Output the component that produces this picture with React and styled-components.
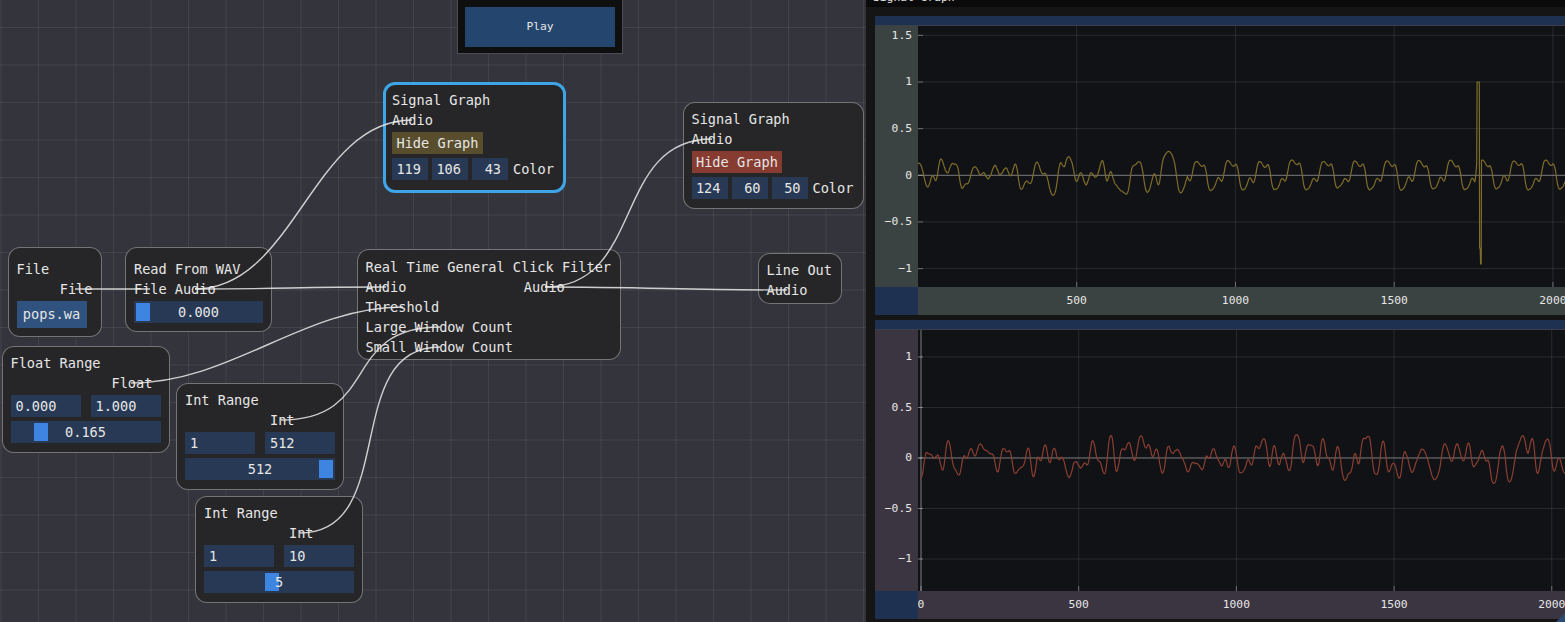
import React from 'react'
import styled, { createGlobalStyle } from 'styled-components'

const GlobalStyle = createGlobalStyle`
  html, body {
    margin: 0;
    padding: 0;
    background: #151515;
  }
  body {
    font-family: "DejaVu Sans Mono", "Liberation Mono", monospace;
    font-size: 13.6px;
    color: #e6e6e6;
  }
  * {
    box-sizing: border-box;
  }
`

// ---------- signal data ----------

function makeRandom(seed) {
  let s = seed >>> 0
  return () => {
    s = (Math.imul(s, 1664525) + 1013904223) >>> 0
    return s / 4294967296
  }
}

function smooth(arr, w, passes) {
  let a = arr
  const h = Math.floor(w / 2)
  for (let p = 0; p < passes; p++) {
    const out = new Array(a.length)
    for (let i = 0; i < a.length; i++) {
      let sum = 0
      let n = 0
      for (let k = -h; k <= h; k++) {
        const j = i + k
        if (j >= 0 && j < a.length) {
          sum += a[j]
          n++
        }
      }
      out[i] = sum / n
    }
    a = out
  }
  return a
}

function normalize(a, std) {
  const m = a.reduce((s, v) => s + v, 0) / a.length
  const v = Math.sqrt(a.reduce((s, x) => s + (x - m) ** 2, 0) / a.length)
  return a.map(x => ((x - m) / v) * std)
}

function whiteNoise(n, seed) {
  const r = makeRandom(seed)
  return Array.from({ length: n }, () => r() * 2 - 1)
}

// soft limit so peaks stay near +-0.25 like the recording
const limit = v => 0.3 * Math.tanh(v / 0.3)

const N = 2060

function topSignal() {
  const noise = normalize(smooth(whiteNoise(N, 7), 13, 3), 0.11)
  const base = normalize(smooth(whiteNoise(300, 31), 13, 3), 0.12)
  const template = Array.from({ length: 100 }, (_, i) => base[100 + i] * (1 - i / 100) + base[i] * (i / 100))
  const data = noise.map((v, i) => {
    const w = i < 850 ? 0.4 : 0.92
    return limit((w * template[i % 100] + (1 - w) * v) / Math.sqrt(w * w + (1 - w) * (1 - w)))
  })
  for (let i = 1755; i < 1761; i++) data[i] = data[i] + (i - 1754) * 0.03
  for (let i = 1761; i < 1769; i++) data[i] = 1.0
  for (let i = 1769; i < 1772; i++) data[i] = -0.78
  for (let i = 1772; i < 1775; i++) data[i] = -0.95
  return data
}

function bottomSignal() {
  return normalize(smooth(whiteNoise(N, 123), 13, 3), 0.12).map(limit)
}

const TOP_DATA = topSignal()
const BOTTOM_DATA = bottomSignal()

// ---------- layout ----------

const Screen = styled.div`
  display: flex;
  width: 1565px;
  height: 622px;
  overflow: hidden;
`

const Canvas = styled.div`
  position: relative;
  flex: none;
  width: 866px;
  height: 100%;
  overflow: hidden;
  background-color: #34343c;
  background-image:
    linear-gradient(to right, rgba(255, 255, 255, 0.07) 1px, transparent 1px),
    linear-gradient(to bottom, rgba(255, 255, 255, 0.07) 1px, transparent 1px);
  background-size: 37.5px 37.5px;
  background-position: 0.5px 27px;
`

const Wires = styled.svg`
  position: absolute;
  left: 0;
  top: 0;
  width: 866px;
  height: 622px;
  pointer-events: none;
  z-index: 2;
`

const Node = styled.div`
  position: absolute;
  z-index: 1;
  left: ${p => p.$x}px;
  top: ${p => p.$y}px;
  width: ${p => p.$w}px;
  height: ${p => p.$h}px;
  padding-top: ${p => p.$pt - (p.$hover ? 3 : 1.5)}px;
  padding-left: ${p => 9.5 - (p.$hover ? 3 : 1.5)}px;
  padding-right: ${p => 9.5 - (p.$hover ? 3 : 1.5)}px;
  border: ${p => (p.$hover ? '3px solid #3ea6e6' : '1.5px solid rgba(255, 255, 255, 0.36)')};
  border-radius: 12px;
  background: #262629;
  display: flex;
  flex-direction: column;
  gap: 4px;
`

const Label = styled.div`
  height: 16px;
  line-height: 16px;
  white-space: pre;
  margin-left: ${p => p.$indent || 0}px;
  align-self: ${p => (p.$right ? 'flex-end' : 'auto')};
`

const PinRow = styled.div`
  display: flex;
  gap: ${p => p.$gap}px;
`

const PinColumn = styled.div`
  display: flex;
  flex-direction: column;
  gap: 4px;
`

const FieldRow = styled.div`
  display: flex;
  align-items: center;
  gap: ${p => p.$gap}px;
`

const Field = styled.div`
  width: ${p => p.$w}px;
  flex: none;
  height: 22px;
  line-height: 22px;
  background: #273954;
  padding: ${p => (p.$right ? '0 7px 0 0' : '0 0 0 5px')};
  text-align: ${p => (p.$right ? 'right' : 'left')};
  white-space: pre;
`

const NodeButton = styled.div`
  align-self: flex-start;
  height: ${p => p.$h || 22}px;
  line-height: ${p => p.$h || 22}px;
  width: ${p => (p.$w ? `${p.$w}px` : 'auto')};
  padding: 0 4.5px;
  text-align: center;
  background: ${p => p.$bg};
  white-space: pre;
`

const Slider = styled.div`
  position: relative;
  width: ${p => p.$w}px;
  height: 22px;
  background: #273954;
  display: flex;
  align-items: center;
  justify-content: center;
`

const Grab = styled.div`
  position: absolute;
  top: 2px;
  bottom: 2px;
  width: 14px;
  left: ${p => 2 + p.$t * (p.$w - 18)}px;
  background: #3d85e0;
`

const SliderValue = styled.span`
  position: relative;
  line-height: 22px;
`

const ColorText = styled.span`
  margin-left: 1px;
  line-height: 22px;
`

const PlayWindow = styled.div`
  position: absolute;
  z-index: 1;
  left: 457px;
  top: -1px;
  width: 166px;
  height: 55px;
  padding: 7px;
  background: #0f0f0f;
  border: 1px solid #4a4a52;
`

const PlayButton = styled.div`
  height: 40px;
  line-height: 40px;
  text-align: center;
  font-size: 11.3px;
  background: #24456e;
`

// ---------- right panel ----------

const Panel = styled.div`
  position: relative;
  flex: 1;
  min-width: 0;
  background: #151515;
  display: flex;
  flex-direction: column;
  overflow: hidden;
  &::after {
    content: '';
    position: absolute;
    right: 0;
    bottom: 0;
    border-style: solid;
    border-width: 0 0 9px 9px;
    border-color: transparent transparent #2b4a74 transparent;
  }
`

const TitleBar = styled.div`
  flex: none;
  height: 19px;
  margin-top: -12px;
  line-height: 19px;
  padding-left: 7px;
  font-size: 11.3px;
  background: #0a0a0a;
  white-space: pre;
`

const PlotStack = styled.div`
  display: flex;
  flex-direction: column;
  gap: 5px;
  padding: 9px 0 0 9px;
`

const PlotFrame = styled.div`
  flex: none;
  width: 690px;
  display: flex;
  flex-direction: column;
`

const PlotHeader = styled.div`
  height: 10px;
  background: #1f3150;
  border-bottom: 1px solid #3a404a;
`

const PlotBody = styled.div`
  display: flex;
  height: 261px;
`

const YAxis = styled.div`
  flex: none;
  width: 43px;
  background: ${p => p.$bg};
`

const PlotArea = styled.div`
  flex: 1;
  background: #111215;
`

const PlotFooter = styled.div`
  display: flex;
  height: 28px;
`

const Corner = styled.div`
  flex: none;
  width: 43px;
  background: #1f3150;
`

const XAxis = styled.div`
  flex: 1;
  background: ${p => p.$bg};
`

const AxisText = styled.text`
  fill: #e6e6e6;
  font-family: "DejaVu Sans Mono", "Liberation Mono", monospace;
  font-size: 11.3px;
`

const PW = 647
const PH = 261

function Plot({ data, color, axisBg, yMin, yMax, xMin, xMax, yTicks, xTicks, showXZero }) {
  const sx = x => ((x - xMin) / (xMax - xMin)) * PW
  const sy = y => ((yMax - y) / (yMax - yMin)) * PH
  const points = data.map((v, i) => `${sx(i).toFixed(1)},${sy(v).toFixed(1)}`).join(' ')

  return (
    <PlotFrame>
      <PlotHeader />
      <PlotBody>
        <YAxis $bg={axisBg}>
          <svg width="43" height={PH}>
            {yTicks.map(t => (
              <AxisText key={t} x="37" y={sy(t)} textAnchor="end" dominantBaseline="central">
                {String(t).replace('-', '\u2212')}
              </AxisText>
            ))}
          </svg>
        </YAxis>
        <PlotArea>
          <svg width={PW} height={PH}>
            {yTicks.map(t => (
              <line key={'gy' + t} x1="0" x2={PW} y1={sy(t)} y2={sy(t)} stroke="rgba(255,255,255,0.1)" />
            ))}
            {xTicks.map(t => (
              <line key={'gx' + t} x1={sx(t)} x2={sx(t)} y1="0" y2={PH} stroke="rgba(255,255,255,0.1)" />
            ))}
            {yTicks.map(t => (
              <line key={'ty' + t} x1="0" x2="5" y1={sy(t)} y2={sy(t)} stroke="rgba(255,255,255,0.35)" />
            ))}
            {xTicks.map(t => (
              <line key={'tx' + t} x1={sx(t)} x2={sx(t)} y1={PH - 5} y2={PH} stroke="rgba(255,255,255,0.35)" />
            ))}
            <line x1="0" x2={PW} y1={sy(0)} y2={sy(0)} stroke="rgba(255,255,255,0.38)" />
            {showXZero && <line x1={sx(0)} x2={sx(0)} y1="0" y2={PH} stroke="rgba(255,255,255,0.38)" />}
            <polyline points={points} fill="none" stroke={color} strokeWidth="1.2" strokeLinejoin="round" />
          </svg>
        </PlotArea>
      </PlotBody>
      <PlotFooter>
        <Corner />
        <XAxis $bg={axisBg}>
          <svg width={PW} height="28">
            {xTicks.map(t => (
              <AxisText key={t} x={sx(t)} y="13" textAnchor="middle" dominantBaseline="central">
                {t}
              </AxisText>
            ))}
          </svg>
        </XAxis>
      </PlotFooter>
    </PlotFrame>
  )
}

// ---------- links ----------

const LINKS = [
  [75, 289, 150, 289],
  [195, 289, 386, 287],
  [195, 289, 412, 120],
  [545, 287, 712, 139],
  [545, 287, 787, 290],
  [131, 383, 403, 307],
  [281, 420, 440, 327],
  [300, 533, 440, 347],
]

const linkPath = ([x0, y0, x1, y1]) => `M${x0},${y0} C${x0 + 100},${y0} ${x1 - 100},${y1} ${x1},${y1}`

function RangeNode({ x, y, title, output, indent, min, max, value, t }) {
  return (
    <Node $x={x} $y={y} $w={168} $h={107} $pt={9}>
      <Label>{title}</Label>
      <Label $indent={indent}>{output}</Label>
      <FieldRow $gap={10}>
        <Field $w={70}>{min}</Field>
        <Field $w={70}>{max}</Field>
      </FieldRow>
      <Slider $w={150}>
        <Grab $w={150} $t={t} />
        <SliderValue>{value}</SliderValue>
      </Slider>
    </Node>
  )
}

function GraphNode({ x, y, w, h, pt, hover, button, values }) {
  return (
    <Node $x={x} $y={y} $w={w} $h={h} $pt={pt} $hover={hover}>
      <Label>Signal Graph</Label>
      <Label>Audio</Label>
      <NodeButton $bg={button}>Hide Graph</NodeButton>
      <FieldRow $gap={4}>
        {values.map((v, i) => (
          <Field key={i} $w={36} $right>
            {v}
          </Field>
        ))}
        <ColorText>Color</ColorText>
      </FieldRow>
    </Node>
  )
}

export default function App() {
  return (
    <>
      <GlobalStyle />
      <Screen>
        <Canvas>
          <PlayWindow>
            <PlayButton>Play</PlayButton>
          </PlayWindow>

          <Node $x={7.5} $y={247} $w={94} $h={90} $pt={14}>
            <Label>File</Label>
            <Label $right>File</Label>
            <NodeButton $bg="#30527e" $h={27} $w={70}>
              pops.wa
            </NodeButton>
          </Node>

          <Node $x={125} $y={247} $w={147} $h={85} $pt={14}>
            <Label>Read From WAV</Label>
            <PinRow $gap={8}>
              <Label>File</Label>
              <Label>Audio</Label>
            </PinRow>
            <Slider $w={129}>
              <Grab $w={129} $t={0} />
              <SliderValue>0.000</SliderValue>
            </Slider>
          </Node>

          <GraphNode x={382.5} y={82} w={183} h={111} pt={10} hover button="#584e2d" values={['119', '106', '43']} />
          <GraphNode x={682.5} y={102} w={181} h={107} pt={9} button="#873c31" values={['124', '60', '50']} />

          <Node $x={356.5} $y={249} $w={264} $h={111} $pt={10}>
            <Label>Real Time General Click Filter</Label>
            <PinRow $gap={11}>
              <PinColumn>
                <Label>Audio</Label>
                <Label>Threshold</Label>
                <Label>Large Window Count</Label>
                <Label>Small Window Count</Label>
              </PinColumn>
              <PinColumn>
                <Label>Audio</Label>
              </PinColumn>
            </PinRow>
          </Node>

          <Node $x={757.5} $y={253} $w={84} $h={51} $pt={9}>
            <Label>Line Out</Label>
            <Label>Audio</Label>
          </Node>

          <RangeNode x={1.5} y={346} title="Float Range" output="Float" indent={101} min="0.000" max="1.000" value="0.165" t={0.165} />
          <RangeNode x={176} y={383} title="Int Range" output="Int" indent={85} min="1" max="512" value="512" t={1} />
          <RangeNode x={195} y={496} title="Int Range" output="Int" indent={85} min="1" max="10" value="5" t={4 / 9} />

          <Wires viewBox="0 0 866 622">
            {LINKS.map((l, i) => (
              <path key={i} d={linkPath(l)} fill="none" stroke="rgba(235,235,235,0.85)" strokeWidth="1.4" />
            ))}
          </Wires>
        </Canvas>

        <Panel>
          <TitleBar>Signal Graph</TitleBar>
          <PlotStack>
            <Plot
              data={TOP_DATA}
              color="#7f6d2c"
              axisBg="#3a4341"
              yMin={-1.197}
              yMax={1.6}
              xMin={0}
              xMax={2038}
              yTicks={[1.5, 1, 0.5, 0, -0.5, -1]}
              xTicks={[500, 1000, 1500, 2000]}
            />
            <Plot
              data={BOTTOM_DATA}
              color="#8a3f32"
              axisBg="#3b3542"
              yMin={-1.317}
              yMax={1.267}
              xMin={-9.5}
              xMax={2042}
              yTicks={[1, 0.5, 0, -0.5, -1]}
              xTicks={[0, 500, 1000, 1500, 2000]}
              showXZero
            />
          </PlotStack>
        </Panel>
      </Screen>
    </>
  )
}
